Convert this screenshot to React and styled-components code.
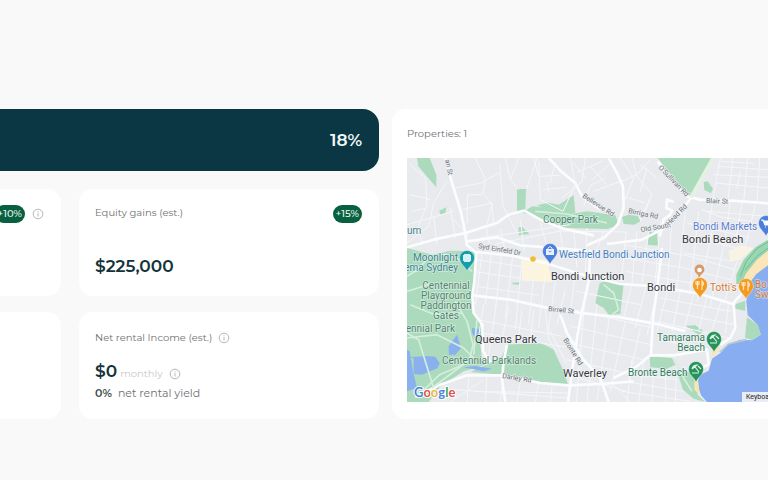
import React from 'react';
import styled, { createGlobalStyle } from 'styled-components';

const GlobalStyle = createGlobalStyle`
    * {
        box-sizing: border-box;
    }
    body {
        margin: 0;
        background-color: #f9f9f9;
        font-family: Montserrat, Inter, sans-serif;
        color: #6f7072;
        overflow-x: hidden;
    }
    h2, p {
        margin: 0;
    }
`;

const Page = styled.main`
    display: grid;
    grid-template-columns: 379fr 376fr;
    gap: 13px;
    padding: 109px 0 60px;
    overflow: hidden;
`;

const Summary = styled.section`
    display: flex;
    flex-direction: column;
    gap: 18px;
    min-width: 0;
`;

const Banner = styled.div`
    display: flex;
    justify-content: flex-end;
    align-items: center;
    height: 62px;
    padding: 0 17px;
    border-radius: 0 16px 16px 0;
    background-color: #0b3744;
    color: #f1f8fa;
    font-size: 17px;
    font-weight: 600;
`;

const Cards = styled.div`
    display: grid;
    grid-template-columns: 61fr 300fr;
    grid-auto-rows: 107px;
    gap: 16px 18px;
`;

const Card = styled.article`
    min-width: 0;
    padding: 16px 17px 16px 16px;
    border-radius: ${({ $cut }) => $cut ? '0 14px 14px 0' : '14px'};
    background-color: #fff;
`;

const CardHeader = styled.div`
    display: flex;
    justify-content: ${({ $end }) => $end ? 'flex-end' : 'space-between'};
    align-items: ${({ $end }) => $end ? 'center' : 'flex-start'};
    gap: 7px;
`;

const Label = styled.h2`
    font-size: 10px;
    font-weight: 400;
    line-height: 16px;
    white-space: nowrap;
`;

const Badge = styled.span`
    flex: none;
    padding: 0 3px;
    border-radius: 9px;
    background-color: #086041;
    color: #e8f6ef;
    font-size: 10px;
    font-weight: 500;
    line-height: 18px;
`;

const InfoButton = styled.button`
    display: flex;
    flex: none;
    padding: 0;
    border: 0;
    background: none;
    color: #b4b6b8;
    cursor: pointer;
`;

const Inline = styled.div`
    display: flex;
    align-items: center;
    gap: 6px;
`;

const RentHeader = styled(Inline)`
    margin-top: 2px;
`;

const Money = styled.p`
    margin-top: ${({ $top }) => $top}px;
    color: #14333b;
    font-size: 17px;
    font-weight: 600;
    line-height: 20px;
`;

const MoneyRow = styled(Inline)`
    margin-top: 15px;
`;

const Period = styled.span`
    margin: 6px 0 0 -3px;
    color: #c6c8ca;
    font-size: 10px;
    line-height: 14px;
`;

const PeriodInfo = styled.span`
    margin-top: 6px;
`;

const Yield = styled.p`
    margin-top: 4px;
    font-size: 11px;
    line-height: 16px;

    b {
        margin-right: 6px;
        color: #444b4e;
        font-weight: 600;
    }
`;

const Properties = styled.section`
    min-width: 0;
    padding: 17px 0 16px 15px;
    border-radius: 14px 0 0 14px;
    background-color: #fff;
`;

const MapFrame = styled.div`
    position: relative;
    height: 244px;
    margin-top: 16px;
    overflow: hidden;
    background-color: #e9eaee;
`;

const MapCanvas = styled.svg`
    display: block;
    width: 100%;
    height: 100%;
    font-family: Roboto, sans-serif;
`;

const Shortcuts = styled.button`
    position: absolute;
    right: 0;
    bottom: 0;
    width: 26px;
    height: 10px;
    padding: 0 0 0 4px;
    border: 0;
    overflow: hidden;
    background-color: #e9edf5;
    color: #222;
    font: 7px/10px Roboto, sans-serif;
    text-align: left;
    white-space: nowrap;
`;

const Info = ({ label }) => (
    <InfoButton type="button" aria-label={label}>
        <svg width="12" height="12" viewBox="0 0 12 12" fill="none" stroke="currentColor">
            <circle cx="6" cy="6" r="4.8" />
            <path d="M6 5.3v3.2M6 3.3v1" />
        </svg>
    </InfoButton>
);

// the map is drawn on a 1083 x 732 sheet
const parks = [
    'M30 0H68L88 50V88L62 58 34 25Z',
    'M330 93H357L355 158 375 145 405 148 445 158 480 170 540 160 625 172 632 190 622 206 600 213 470 210 410 185 375 172 330 160Z',
    'M390 142L425 134 455 140 500 112 505 165 480 172 420 155Z',
    'M645 177L665 170 692 174 700 190 682 200 650 198Z',
    'M752 0H918L852 118 815 95 795 55Z',
    'M890 72L902 70 918 92 912 106 892 96Z',
    'M0 270L45 282 75 290 130 278 205 280 210 300 200 420 200 470 225 490 232 525 220 560 225 600 235 620 170 640 100 685 65 732H0Z',
    'M300 560L400 556 428 568 440 575 470 640 483 680 400 672 300 652 190 642 250 615 285 595Z',
    'M578 375L605 368 650 376 640 468 605 470 590 450 565 435Z',
    'M335 208L345 207 368 228 335 232Z',
    'M727 222L750 224 753 263 722 260Z',
    'M728 595L795 600 805 620 780 632 730 628Z',
    'M810 640L865 645 872 710 895 732 860 722 828 695Z',
    'M835 503L865 502 890 520 875 530Z',
    'M1020 478L1052 500 1062 530 1035 546 1014 540Z',
    'M980 440L1015 428 1015 458 985 452Z',
    'M97 158L118 148 115 165 100 170Z',
    'M315 374L340 373 337 380 318 379Z',
];

const water = [
    'M5 598L60 594 85 596 98 616 92 630 45 650 20 648 20 600Z',
    'M0 575L8 580 18 640 30 690 0 700Z',
    'M125 565L150 530 162 570 145 590 126 590Z',
    'M195 510L215 512 220 528 205 540 195 525Z',
    'M170 628L205 624 255 632 230 640Z',
];

const highways = [
    'M115 0L135 75 160 155 172 210 180 262 208 285 202 370 196 415 200 465 226 500 228 580 250 612',
    'M0 268L80 245 175 225 270 195 305 170 335 162 352 158 400 185 470 212 560 232',
    'M205 282L310 292 415 315 510 345 640 378 750 385 880 408 985 440',
    'M180 250L270 238 340 262 440 270 540 278',
    'M425 0L460 38 505 75 525 115 580 155',
    'M605 0L630 45 648 85 650 150 632 200 590 240 540 262',
    'M752 10L790 60 840 115 880 125 975 128 1083 136',
    'M852 120L805 180 770 212 705 245 600 258',
    'M800 132L780 125 778 150 795 158 790 170 770 185 758 235',
    'M195 412L310 425 415 448 520 465 640 478 760 500 835 520',
    'M550 275L545 370 525 460 510 540 495 640 483 732',
    'M460 470L480 525 525 600 580 660 605 732',
    'M50 705L100 680 180 652 290 652 400 675 485 682 580 678 680 670',
    'M765 270L752 380 738 480 732 590 690 625 620 660',
    'M732 592L800 592 900 575 905 620 880 630',
    'M300 560L290 610 285 665 295 732',
    'M975 440L1010 400 M980 438L985 510 970 540 940 560',
];

const streets = [
    'M205 0L235 65 228 105 255 140 240 200M145 90L222 75 275 45M165 155L255 135 260 205M225 110L182 110 180 200M120 70L80 135 65 205 0 255M295 0L310 65 335 95M278 20L288 145 330 225M335 0L310 65',
    'M390 0L360 90M395 10L400 125 468 160 505 80 490 0M400 55L460 52M408 95L480 88M535 0L525 72 465 120M510 42L585 10M555 66L608 18M445 10L430 75M420 70L425 105M380 0L395 55M500 15L535 60',
    'M640 0L680 60 655 125M630 75L690 50 730 5M675 0L690 55 735 110 700 182M700 20L750 60M595 60L550 82 530 145M640 112L715 135M730 125L700 190M720 30L700 100M550 25L600 80M560 100L640 70',
    'M940 0L920 115M978 0L962 130M1022 0L1010 130M1058 0L1050 135M925 75L1083 90M930 25L1083 35M920 50L1083 58M940 10L1040 16M1000 40L990 92',
    'M228 265L205 440M255 272L235 438M285 278L265 455M318 285L295 480M345 300L325 515M210 305L400 335M210 342L390 368M208 385L395 412M385 305L365 500M415 350L395 510M445 370L425 510M475 395L450 500M505 350L490 460',
    'M238 210L250 270M280 212L295 280M340 185L352 280M400 195L425 280M455 190L470 290M500 215L510 330M540 210L535 345M590 220L560 300M220 240L325 225 490 200M265 258L460 219 655 222',
    'M230 440L215 535M268 440L245 590M305 445L285 545M345 455L333 550M380 458L370 555M415 450L425 545 450 580M210 485L465 535M225 525L480 568M425 512L480 620',
    'M510 400L700 440M500 455L738 510M492 505L732 560M485 555L710 605M478 605L680 650M475 650L660 700M535 410L508 732M570 440L540 732M608 475L570 725M655 490L610 700M700 510L665 665M675 380L650 480M718 380L685 510M750 400L720 530',
    'M658 220L642 380M690 220L675 375M727 200L705 375M760 190L745 370M795 180L780 400M835 160L808 405M875 160L848 410M920 200L870 430M955 240L910 445M990 310L950 440M650 260L850 295 985 335M645 298L830 330 970 365M655 340L850 375 985 398M840 195L1030 240M850 235L990 270M830 285L980 310',
    'M785 385L750 520M820 400L795 520M860 410L830 515M900 415L875 520M945 425L910 530M965 430L955 525M760 455L980 500M750 490L965 540M760 420L970 460M750 540L860 570',
    'M675 605L660 732M710 615L695 732M740 635L735 732M775 635L777 732M808 650L805 732M650 670L830 700M645 700L850 730M610 670L670 732M690 650L810 665',
    'M10 20L55 60 60 140 35 200M10 110L70 125M0 200L70 180 140 160M35 200L45 260M80 175L90 260M130 150L145 240M186 235L140 185M15 160L60 150',
    'M130 732L230 665M185 660L180 732M240 655L235 732M288 665L280 732M340 670L330 732M395 675L385 732M435 685L430 732M490 690L480 732M145 695L480 720M200 700L480 705',
    'M885 155L945 178 1035 190M920 115L905 200M970 130L955 240M1005 135L985 255M1045 140L1015 265M900 160L1083 175',
];

const footpaths = [
    'M0 525L35 545 78 685M0 540L90 530 170 570 200 600M145 430L180 490 198 560 188 605 75 690M70 295L25 340 0 355M0 400L70 378M210 485L200 590',
    'M100 285L150 300 195 340M10 440L78 468 168 465M180 615L98 650 25 720M385 160L480 168 600 195',
    'M590 380L620 405 635 455 615 470M800 600L830 660 855 700',
];

const placeNames = [
    { x: 682, y: 243, text: 'Bondi Beach', size: 11 },
    { x: 551, y: 280, text: 'Bondi Junction', size: 11 },
    { x: 647, y: 291, text: 'Bondi', size: 11 },
    { x: 475, y: 343, text: 'Queens Park', size: 11 },
    { x: 563, y: 377, text: 'Waverley', size: 11 },
    { x: 543, y: 223, text: 'Cooper Park', size: 10, color: '#47806d' },
    { x: 407, y: 234, text: 'um', size: 10, color: '#47808a' },
    { x: 458, y: 261, text: 'Moonlight', size: 10, color: '#398290', anchor: 'end' },
    { x: 458, y: 271, text: 'ema Sydney', size: 10, color: '#398290', anchor: 'end' },
    { x: 446, y: 289, text: 'Centennial', size: 10, color: '#50836d', anchor: 'middle' },
    { x: 446, y: 299, text: 'Playground', size: 10, color: '#50836d', anchor: 'middle' },
    { x: 446, y: 309, text: 'Paddington', size: 10, color: '#50836d', anchor: 'middle' },
    { x: 446, y: 319, text: 'Gates', size: 10, color: '#50836d', anchor: 'middle' },
    { x: 455, y: 332, text: 'ennial Park', size: 10, color: '#50836d', anchor: 'end' },
    { x: 442, y: 364, text: 'Centennial Parklands', size: 10, color: '#50836d' },
    { x: 559, y: 258, text: 'Westfield Bondi Junction', size: 10, color: '#427fc1' },
    { x: 693, y: 230, text: 'Bondi Markets', size: 10, color: '#5c7fce' },
    { x: 710, y: 291, text: "Totti's", size: 10, color: '#d47a35' },
    { x: 755, y: 288, text: 'Bo', size: 10, color: '#d47a35' },
    { x: 755, y: 298, text: 'Sw', size: 10, color: '#d47a35' },
    { x: 705, y: 341, text: 'Tamarama', size: 10, color: '#2f7d5a', anchor: 'end' },
    { x: 705, y: 351, text: 'Beach', size: 10, color: '#2f7d5a', anchor: 'end' },
    { x: 628, y: 376, text: 'Bronte Beach', size: 10, color: '#2f7d5a' },
];

const roadNames = [
    { x: 478, y: 248, text: 'Syd Einfeld Dr', turn: 10 },
    { x: 548, y: 311, text: 'Birrell St', turn: 6 },
    { x: 502, y: 378, text: 'Darley Rd', turn: 9 },
    { x: 563, y: 340, text: 'Bronte Rd', turn: 58 },
    { x: 582, y: 197, text: 'Bellevue Rd', turn: 33 },
    { x: 628, y: 213, text: 'Birriga Rd', turn: 11 },
    { x: 658, y: 168, text: "O'Sullivan Rd", turn: 46 },
    { x: 706, y: 203, text: 'Blair St', turn: 2 },
    { x: 641, y: 232, text: 'Old South', turn: -9 },
    { x: 669, y: 226, text: 'Head Rd', turn: -46 },
    { x: 445, y: 160, text: 'an St', turn: 78 },
];

const Pin = ({ x, y, color, kind }) => (
    <g transform={`translate(${x} ${y})`}>
        <path d="M0 11.5C-1 7-7.5 4-7.5-2A7.5 7.5 0 0 1 7.5-2C7.5 4 1 7 0 11.5Z" fill={color} stroke="#fff" strokeWidth=".4" />
        {kind === 'bag' && (
            <>
                <path d="M-4-4H4V2H-4Z" fill="#e6f0ff" />
                <path d="M-2-4V-5Q0-8 2-5V-4" fill="none" stroke="#e6f0ff" />
                <path d="M-1.5-2Q0 0 1.5-2" fill="none" stroke={color} strokeWidth=".8" />
            </>
        )}
        {kind === 'cinema' && <path d="M-3-6H3V-5H4V1H3V2H-3V1H-4V-5H-3Z" fill="#d5f3f5" />}
        {kind === 'food' && <path d="M-4-6v3q1.500 2 3 0v-3M-2.500-6v8M2 3V-6q3 3 0 5" fill="none" stroke="#ffe6bd" strokeWidth="1.200" />}
        {kind === 'beach' && <path d="M-4-2Q-3-6 1-6L-4-2M-1-4L3 1M-4 2h7M2-5l3 3" fill="none" stroke="#dff3e6" strokeWidth="1.2" />}
        {kind === 'shop' && <path d="M-5-5h2l2 5h5l1-4h-7M-1 2h1M4 2h1" fill="#fff" stroke="#fff" strokeWidth="1.2" />}
    </g>
);

const SuburbMap = () => (
    <MapFrame>
        <MapCanvas viewBox="407 158 361 244" preserveAspectRatio="xMinYMin slice" role="img" aria-label="Map of Bondi">
            <g transform="translate(407 158) scale(.33333)">
                <g fill="#abdabd">{parks.map(d => <path key={d} d={d} />)}</g>
                <g fill="#8bb0ee">{water.map(d => <path key={d} d={d} />)}</g>
                <path d="M345 300L420 305 435 372 345 368Z" fill="#fcf4dc" />
                <path d="M965 280L1000 262 1040 270 1000 305 970 310Z" fill="#f8f4e3" />
                <g fill="none" strokeLinejoin="round">
                    <g stroke="#f5f6f9" strokeWidth="3">{streets.map(d => <path key={d} d={d} />)}</g>
                    <g stroke="#fbfcfd" strokeWidth="8">{highways.map(d => <path key={d} d={d} />)}</g>
                    <g stroke="#d5efdd" strokeWidth="5">{footpaths.map(d => <path key={d} d={d} />)}</g>
                    <path d="M918 0L852 118" stroke="#e3f3df" strokeWidth="11" />
                </g>
                <path d="M1083 245L1045 268 1010 305 988 350 988 378 1005 378 1015 350 1083 290Z" fill="#9bd5b2" />
                <path d="M1083 252L1050 272 1018 310 1000 355M1083 270L1050 295 1015 335" fill="none" stroke="#6cbf90" strokeWidth="3" />
                <path d="M1083 278L1050 305 1018 345 1005 375 1025 375 1050 350 1083 325Z" fill="#fae6b8" />
                <path
                    d="M1083 322L1048 348 1028 375 1022 400 1018 430 1022 472 1052 500 1062 530 1035 547 1000 545 965 558 940 585 915 602 905 638 880 650 870 675 882 712 900 732H1083Z"
                    fill="#88adf1"
                />
                <path d="M1018 545L965 558 938 582" fill="none" stroke="#b5c9d6" strokeWidth="5" />
                <path d="M915 565L940 570 915 600ZM862 660L874 672 878 710 862 695Z" fill="#f8e6b0" />
            </g>
            <g fill="#6b7078" fontSize="7" stroke="#eef0f2" strokeWidth="1.2" paintOrder="stroke">
                {roadNames.map(({ x, y, text, turn }) => (
                    <text key={text} transform={`translate(${x} ${y}) rotate(${turn})`}>{text}</text>
                ))}
            </g>
            <g stroke="#fff" strokeOpacity=".5" strokeWidth="1.4" paintOrder="stroke">
                {placeNames.map(({ x, y, text, size, color, anchor }) => (
                    <text key={text} x={x} y={y} fontSize={size} fill={color || '#34363a'} textAnchor={anchor}>{text}</text>
                ))}
            </g>
            <Pin x={550} y={253} color="#4b7fdc" kind="bag" />
            <Pin x={467} y={260} color="#169caa" kind="cinema" />
            <Pin x={766} y={225} color="#4b7fdc" kind="shop" />
            <Pin x={714} y={341} color="#27935a" kind="beach" />
            <Pin x={696} y={371} color="#27935a" kind="beach" />
            <path d="M699 278q0-3-3-5a5 5 0 1 1 7 0q-3 2-4 5z" fill="#d79a68" />
            <circle cx="699.5" cy="270" r="2.3" fill="#fff" />
            <Pin x={700} y={287} color="#f39a21" kind="food" />
            <Pin x={746} y={288} color="#f39a21" kind="food" />
            <circle cx="533" cy="259" r="2.8" fill="#edbd36" />
            <text x="414" y="397" fontFamily="Lato, sans-serif" fontSize="13" fontWeight="700" stroke="#fff" strokeWidth="2" paintOrder="stroke">
                <tspan fill="#4b84db">G</tspan><tspan fill="#dc5349">o</tspan><tspan fill="#e9b63a">o</tspan><tspan fill="#4b84db">g</tspan><tspan fill="#439d66">l</tspan><tspan fill="#dc5349">e</tspan>
            </text>
        </MapCanvas>
        <Shortcuts type="button">Keyboard shortcuts</Shortcuts>
    </MapFrame>
);

export default function App() {
    return (
        <>
            <GlobalStyle />
            <Page>
                <Summary>
                    <Banner>18%</Banner>
                    <Cards>
                        <Card $cut>
                            <CardHeader $end>
                                <Badge>+10%</Badge>
                                <Info label="About growth" />
                            </CardHeader>
                        </Card>
                        <Card>
                            <CardHeader>
                                <Label>Equity gains (est.)</Label>
                                <Badge>+15%</Badge>
                            </CardHeader>
                            <Money $top={33}>$225,000</Money>
                        </Card>
                        <Card $cut />
                        <Card>
                            <RentHeader>
                                <Label>Net rental Income (est.)</Label>
                                <Info label="About net rental income" />
                            </RentHeader>
                            <MoneyRow>
                                <Money $top={0}>$0</Money>
                                <Period>monthly</Period>
                                <PeriodInfo><Info label="About monthly income" /></PeriodInfo>
                            </MoneyRow>
                            <Yield><b>0%</b>net rental yield</Yield>
                        </Card>
                    </Cards>
                </Summary>
                <Properties>
                    <Label>Properties: 1</Label>
                    <SuburbMap />
                </Properties>
            </Page>
        </>
    );
}
